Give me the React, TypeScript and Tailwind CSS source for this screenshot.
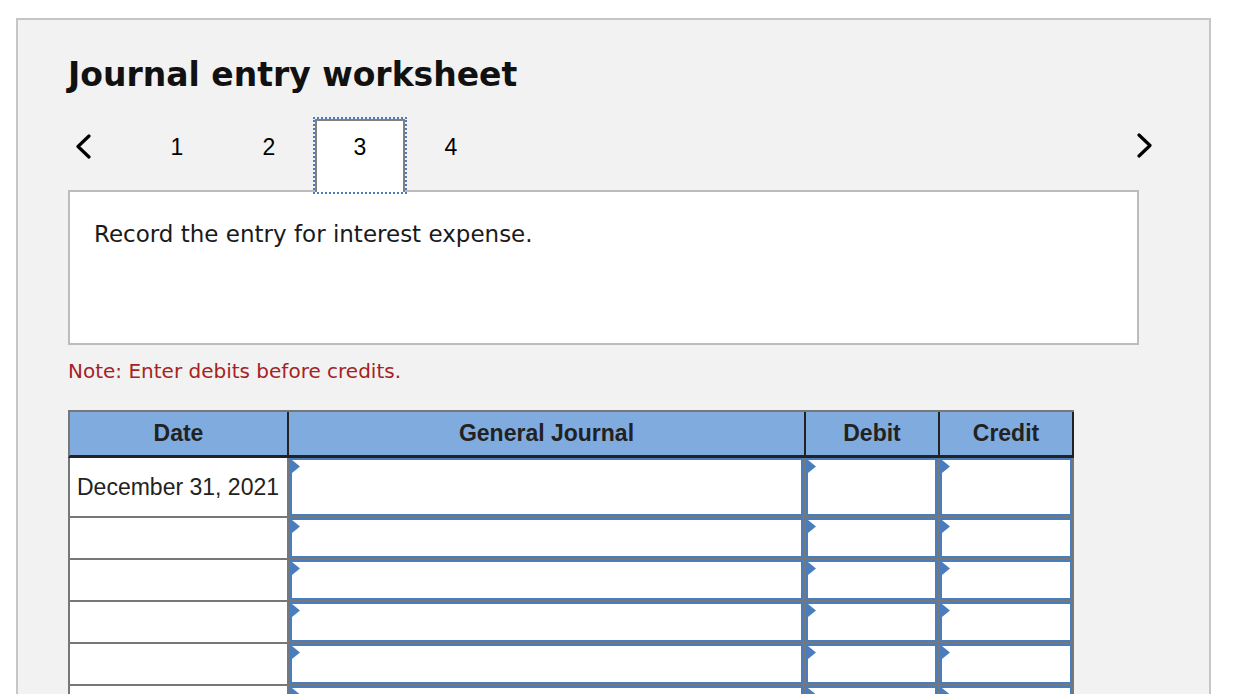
import React from "react";

const verdana = { fontFamily: '"DejaVu Sans", Verdana, sans-serif' };
const arial = { fontFamily: '"Liberation Sans", Arial, sans-serif' };

export default function App() {
  const rows = [
    { date: "December 31, 2021", tall: true },
    { date: "" },
    { date: "" },
    { date: "" },
    { date: "" },
    { date: "" },
    { date: "" },
  ];

  return (
    <div className="h-[694px] overflow-hidden bg-white pl-[16px] pr-[23px] pt-[18px]">
      <div className="min-h-[700px] border-2 border-[#c6c6c6] bg-[#f2f2f2] pl-[50px] pr-[50px] pt-[36px]">
        <h1 className="text-[33px] font-bold leading-[38px] text-[#111]" style={verdana}>
          Journal entry worksheet
        </h1>

        <div className="mt-[25px] flex h-[72px] items-start" style={arial}>
          <div className="w-[63px] pl-[7px] pt-[15px]">
            <Chevron dir="left" />
          </div>
          <Tab label="1" />
          <Tab label="2" />
          <div className="relative z-10 h-[73px] w-[90px] border-2 border-b-0 border-[#808080] bg-white pt-[13px] text-center text-[23px] leading-[26px] text-black outline-2 outline-dotted outline-[#4a7ebb]">
            3
          </div>
          <Tab label="4" />
          <div className="ml-auto mr-[6px] pt-[14px]">
            <Chevron dir="right" />
          </div>
        </div>

        <div className="-mt-px h-[155px] w-[1071px] border-2 border-[#bcbcbc] bg-white pl-[24px] pt-[29px]">
          <p className="text-[23px] leading-[27px] text-[#1a1a1a]" style={verdana}>
            Record the entry for interest expense.
          </p>
        </div>

        <p className="mt-[15px] text-[20px] leading-[23px] text-[#a52323]" style={verdana}>
          Note: Enter debits before credits.
        </p>

        <div className="mt-[27px] w-[1006px]" style={arial}>
          <div className="flex h-[48px] border-t-2 border-l-2 border-b-[3px] border-[#777] border-b-[#222] bg-[#80abdf] text-[23px] font-bold text-[#222]">
            <HeadCell className="w-[219px]">Date</HeadCell>
            <HeadCell className="w-[517px]">General Journal</HeadCell>
            <HeadCell className="w-[134px]">Debit</HeadCell>
            <HeadCell className="w-[134px]">Credit</HeadCell>
          </div>

          {rows.map((r, i) => (
            <div
              key={i}
              className={`flex border-b-2 border-l-2 border-r-2 border-[#777] ${r.tall ? "h-[60px]" : "h-[42px]"}`}
            >
              <div className="flex w-[219px] items-center border-r-2 border-[#777] bg-white pl-[7px] pt-px text-[23px] text-[#222]">
                {r.date}
              </div>
              <div className="w-[517px] bg-[#777] pl-px pr-[3px]">
                <InputBox />
              </div>
              <div className="w-[134px] bg-[#777] pr-[3px]">
                <InputBox />
              </div>
              <div className="w-[132px] bg-[#777]">
                <InputBox />
              </div>
            </div>
          ))}
        </div>
      </div>
    </div>
  );
}

function Tab({ label }: { label: string }) {
  return (
    <div className="w-[92px] pt-[15px] text-center text-[23px] leading-[26px] text-black">
      {label}
    </div>
  );
}

function HeadCell({ className, children }: { className: string; children: React.ReactNode }) {
  return (
    <div className={`flex items-center justify-center border-r-2 border-[#222] ${className}`}>
      {children}
    </div>
  );
}

function InputBox() {
  return (
    <div className="relative h-full border-2 border-[#4a7dbd] bg-white">
      <svg className="absolute left-0 top-0" width="8" height="13" viewBox="0 0 8 13">
        <polygon points="0,0 8,6.5 0,13" fill="#4a7dbd" />
      </svg>
    </div>
  );
}

function Chevron({ dir }: { dir: "left" | "right" }) {
  const pts = dir === "left" ? "14,2 3,12.5 14,23" : "2,2 13,12.5 2,23";
  return (
    <svg width="16" height="25" viewBox="0 0 16 25" fill="none">
      <polyline points={pts} stroke="#000" strokeWidth="3.2" strokeLinecap="round" strokeLinejoin="round" />
    </svg>
  );
}
